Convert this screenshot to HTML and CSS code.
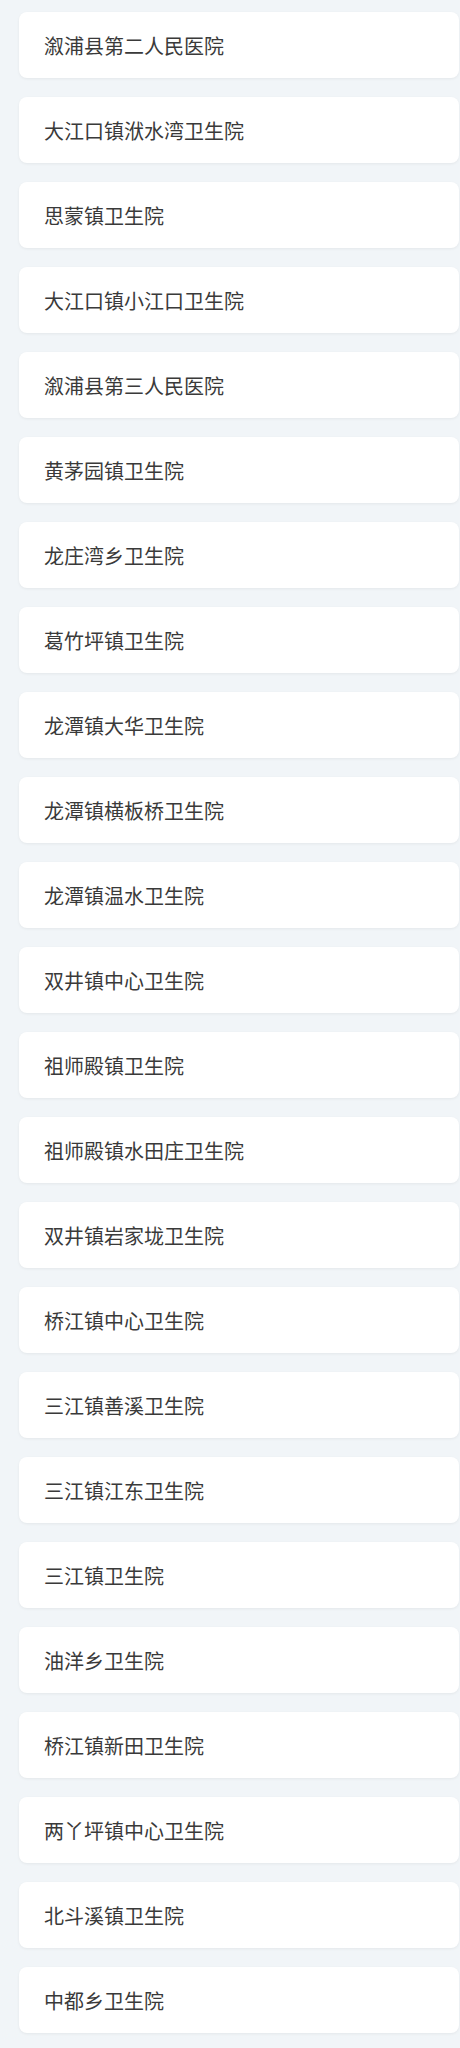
FILE: index.html
```html
<!DOCTYPE html>
<html lang="zh-CN">
<head>
<meta charset="utf-8">
<link rel="stylesheet" href="styles.css">
</head>
<body>
<ul class="list">
<li class="card">溆浦县第二人民医院</li>
<li class="card">大江口镇洑水湾卫生院</li>
<li class="card">思蒙镇卫生院</li>
<li class="card">大江口镇小江口卫生院</li>
<li class="card">溆浦县第三人民医院</li>
<li class="card">黄茅园镇卫生院</li>
<li class="card">龙庄湾乡卫生院</li>
<li class="card">葛竹坪镇卫生院</li>
<li class="card">龙潭镇大华卫生院</li>
<li class="card">龙潭镇横板桥卫生院</li>
<li class="card">龙潭镇温水卫生院</li>
<li class="card">双井镇中心卫生院</li>
<li class="card">祖师殿镇卫生院</li>
<li class="card">祖师殿镇水田庄卫生院</li>
<li class="card">双井镇岩家垅卫生院</li>
<li class="card">桥江镇中心卫生院</li>
<li class="card">三江镇善溪卫生院</li>
<li class="card">三江镇江东卫生院</li>
<li class="card">三江镇卫生院</li>
<li class="card">油洋乡卫生院</li>
<li class="card">桥江镇新田卫生院</li>
<li class="card">两丫坪镇中心卫生院</li>
<li class="card">北斗溪镇卫生院</li>
<li class="card">中都乡卫生院</li>
</ul>
</body>
</html>
```

FILE: styles.css
```css
html, body {
  margin: 0;
  padding: 0;
  background: #f1f5f8;
}
body {
  font-family: "Noto Sans CJK SC", "Noto Sans", sans-serif;
  color: #3a3a3a;
}
.list {
  list-style: none;
  margin: 0;
  padding: 12px 1px 20px 19px;
  display: flex;
  flex-direction: column;
  gap: 19px;
}
.card {
  height: 66px;
  box-sizing: border-box;
  background: #fff;
  border-radius: 8px;
  box-shadow: 0 1px 3px rgba(0, 0, 0, 0.06);
  display: flex;
  align-items: center;
  padding: 2px 0 0 25px;
  font-size: 20px;
  line-height: 1;
}
```
